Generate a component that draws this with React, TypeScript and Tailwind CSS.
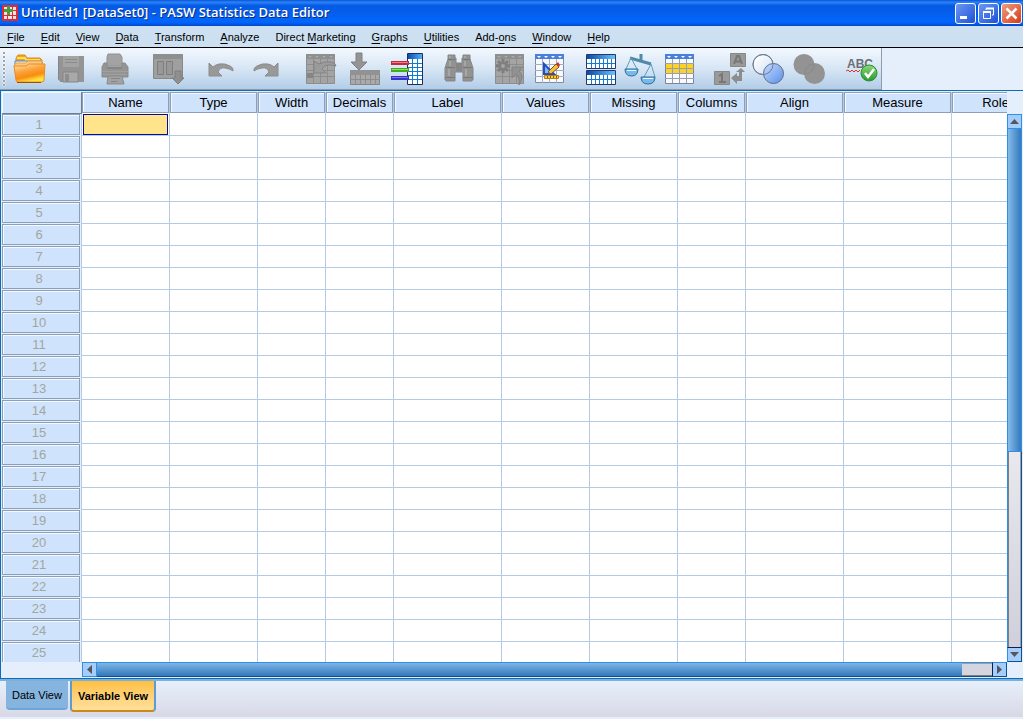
import { useState } from "react"
import type { ReactNode } from "react"

const menus = [
  { label: "File", key: 0 },
  { label: "Edit", key: 0 },
  { label: "View", key: 0 },
  { label: "Data", key: 0 },
  { label: "Transform", key: 0 },
  { label: "Analyze", key: 0 },
  { label: "Direct Marketing", key: 7 },
  { label: "Graphs", key: 0 },
  { label: "Utilities", key: 0 },
  { label: "Add-ons", key: 4 },
  { label: "Window", key: 0 },
  { label: "Help", key: 0 },
]

const columns = [
  { name: "Name", width: 88 },
  { name: "Type", width: 88 },
  { name: "Width", width: 68 },
  { name: "Decimals", width: 68 },
  { name: "Label", width: 108 },
  { name: "Values", width: 88 },
  { name: "Missing", width: 88 },
  { name: "Columns", width: 68 },
  { name: "Align", width: 98 },
  { name: "Measure", width: 108 },
  { name: "Role", width: 88 },
]

const rows = Array.from({ length: 25 }, (_, i) => i + 1)

function Icon({ children }: { children: ReactNode }) {
  return (
    <svg width="34" height="34" viewBox="0 0 34 34" className="shrink-0" aria-hidden="true">
      {children}
    </svg>
  )
}

// small triangles in the header strip of the table icons
function HeaderMarks({ x, y, fill }: { x: number; y: number; fill: string }) {
  return (
    <g fill={fill}>
      {[0, 7, 14, 21].map((d) => (
        <path key={d} d={`M${x + d} ${y}h4l-2 2z`} />
      ))}
    </g>
  )
}

const OpenIcon = () => (
  <Icon>
    <defs>
      <linearGradient id="folderFront" x1="0" y1="0" x2="0.4" y2="1">
        <stop offset="0" stopColor="#ffe9c4" />
        <stop offset="0.45" stopColor="#fba43a" />
        <stop offset="0.75" stopColor="#f98b12" />
        <stop offset="1" stopColor="#ffe23c" />
      </linearGradient>
    </defs>
    <path d="M3 12V6l2-3h7l2 3h13l2 2v6H3z" fill="#f9a21d" stroke="#e08a1c" />
    <path d="M4 6h8l1 2h14" fill="none" stroke="#ffe25a" strokeWidth="2" />
    <path d="M2 9h26l1 1v4H2z" fill="#e8f4ff" stroke="#3b8ad8" />
    <path d="M1 14l2-3h10l2-2h14v6H1z" fill="#ffc878" stroke="#f0a040" />
    <path d="M1 14h12l3-2h16l-1 16q0 2-2 2H5q-2 0-2-2z" fill="url(#folderFront)" stroke="#ea8a24" />
    <path d="M4 30.500h24" stroke="#a05208" />
  </Icon>
)

const SaveIcon = () => (
  <Icon>
    <path d="M2 4h26v26H5l-3-3z" fill="#949494" />
    <path d="M7 4h16v11H7z" fill="#a4a4a4" />
    <path d="M9 7.500h12M9 10.500h12" stroke="#8b8b8b" />
    <path d="M7 20h15v10H7z" fill="#a9a9a9" stroke="#868686" />
    <path d="M9 22h4v8H9z" fill="#8d8d8d" />
    <path d="M2.500 5v22l3 3" fill="none" stroke="#858585" />
  </Icon>
)

const PrintIcon = () => (
  <Icon>
    <path d="M9 2h12l2 3v9H8V5z" fill="#a3a3a3" stroke="#929292" />
    <path d="M5 11h3v4h15v-4h3l3 4v10H3V15z" fill="#949494" stroke="#8b8b8b" />
    <path d="M3 19.500h26M4 22.500h24" stroke="#a0a0a0" />
    <path d="M8 15h15v2H8z" fill="#858585" />
    <path d="M9 24h14l2 8H8z" fill="#a2a2a2" stroke="#8b8b8b" />
    <path d="M12 26.500h9M12 29.500h6" stroke="#868686" />
  </Icon>
)

const RecallIcon = () => (
  <Icon>
    <path d="M2.500 2.500h29v24h-29z" fill="#9f9f9f" stroke="#888" />
    <path d="M2 2h30v5H2z" fill="#8f8f8f" />
    <path d="M6.500 9.500h6v13h-6zM15.500 9.500h6v13h-6z" fill="#989898" stroke="#7e7e7e" />
    <path d="M24 19h6v7h3l-6 6-6-6h3z" fill="#8f8f8f" stroke="#7f7f7f" />
  </Icon>
)

const UndoIcon = () => (
  <Icon>
    <path d="M5 11v13h13l-4-4q2-5 7-4 6 1 8 3 1-3-3-5-5-3-11-2-4 1-6 3z" fill="#999" stroke="#8c8c8c" />
  </Icon>
)

const RedoIcon = () => (
  <Icon>
    <path d="M30 11v13H17l4-4q-2-5-7-4-6 1-8 3-1-3 3-5 5-3 11-2 4 1 6 3z" fill="#999" stroke="#8c8c8c" />
  </Icon>
)

const GreyTable = () => (
  <g>
    <path d="M3.500 2.500h28v29h-28z" fill="#a4a4a4" stroke="#8d8d8d" />
    <path d="M3 2h29v5H3z" fill="#8f8f8f" />
    <HeaderMarks x={5} y={4} fill="#a9a9a9" />
    <path d="M10.500 7v24M17.500 7v24M24.500 7v24M3 12.500h29M3 18.500h29M3 24.500h29" stroke="#8d8d8d" />
  </g>
)

const GoToCaseIcon = () => (
  <Icon>
    <GreyTable />
    <path d="M4 21h6v5H4z" fill="#858585" />
    <path d="M11 9v12h12l-4-4q2-4 6-4 4 0 8 1 0-3-5-4-7-1-12 2z" fill="#9b9b9b" stroke="#838383" />
  </Icon>
)

const GoToVariableIcon = () => (
  <Icon>
    <path d="M3.500 18.500h29v14h-29z" fill="#a9a9a9" stroke="#858585" />
    <path d="M3 18h30v5H3z" fill="#929292" />
    <path d="M8.500 23v10M13.500 23v10M18.500 23v10M23.500 23v10M28.500 23v10M3 27.500h30" stroke="#8d8d8d" />
    <path d="M9 1h6v9h5l-8 8-8-8h5z" fill="#949494" stroke="#808080" />
  </Icon>
)

const VariablesIcon = () => (
  <Icon>
    <defs>
      <linearGradient id="varHead" x1="0" y1="0" x2="1" y2="0">
        <stop offset="0" stopColor="#0c4fae" />
        <stop offset="1" stopColor="#4fb0fa" />
      </linearGradient>
    </defs>
    <path d="M16.500 1.500h15v31h-15z" fill="#fff" stroke="#1d2c5e" />
    <path d="M17 2h14v5H17z" fill="url(#varHead)" />
    <path d="M21.500 7v25M26.500 7v25M17 11.500h14M17 15.500h14M17 19.500h14M17 23.500h14M17 27.500h14" stroke="#1278d8" />
    <path d="M0 9h18v4H0z" fill="#c52a3e" />
    <path d="M1 10.500h16" stroke="#ee7a84" />
    <path d="M0 16h18v4H0z" fill="#3fae1f" />
    <path d="M1 17.500h16" stroke="#8ee068" />
    <path d="M0 24h18v4H0z" fill="#2e37c4" />
    <path d="M1 25.500h16" stroke="#8c70ee" />
  </Icon>
)

const FindIcon = () => (
  <Icon>
    <path d="M6 3h7v3h1v5h6V6h1V3h7v4l3 9v12h-1v1h-9v-9h-8v9H4v-1H3V16l3-9z" fill="#929292" stroke="#868686" />
    <path d="M6 7.500h7M21 7.500h7M4 15.500h9M21 15.500h9M3 25.500h10M21 25.500h10" stroke="#787878" />
    <path d="M8 4v2M8 9v5M7 17v7M23 4v2M23 9v5M24 17v7" stroke="#a6a6a6" strokeWidth="2" />
    <path d="M14 11h6v8h-6z" fill="#868686" />
  </Icon>
)

const InsertCasesIcon = () => (
  <Icon>
    <GreyTable />
    <path d="M11 7v14M4 14h14M6 9l10 10M16 9L6 19" stroke="#7f7f7f" strokeWidth="3" />
    <circle cx="11" cy="14" r="2" fill="#a5a5a5" />
    <path d="M20 15h11l-4 4q6 5 0 14 1-8-3-11l-4 4z" fill="#919191" stroke="#828282" />
  </Icon>
)

const InsertVariableIcon = () => (
  <Icon>
    <path d="M2.500 2.500h28v28h-28z" fill="#f6f9fd" stroke="#7e8ca4" />
    <path d="M2 2h29v5H2z" fill="#4a80da" />
    <HeaderMarks x={4} y={4} fill="#fff" />
    <path d="M9.500 7v24M16.500 7v24M23.500 7v24M2 12.500h29M2 18.500h29M2 24.500h29" stroke="#a3adbd" />
    <path d="M11 12v10h10z" fill="#8bb4f4" stroke="#1c50c4" strokeWidth="2" />
    <path d="M15 20l8-8 3 3-8 7z" fill="#f5c13c" stroke="#7c5420" />
    <path d="M23 12l2-2 2 3-1 2z" fill="#c33a2a" />
    <path d="M11.500 23.500h14v3h-14z" fill="#ffd02c" stroke="#c07b0a" />
    <path d="M14.500 24v2M17.500 24v2M20.500 24v2M23.500 24v2" stroke="#8d5a00" />
  </Icon>
)

const SplitTable = ({ y }: { y: number }) => (
  <g transform={`translate(2 ${y})`}>
    <path d="M.5.5h29v14H.5z" fill="#fff" stroke="#24386c" />
    <path d="M1 1h28v4H1z" fill="url(#splitHead)" />
    <path d="M5.500 5v9M9.500 5v9M13.500 5v9M17.500 5v9M21.500 5v9M25.500 5v9M1 9.500h28" stroke="#1679d2" />
  </g>
)

const SplitIcon = () => (
  <Icon>
    <defs>
      <linearGradient id="splitHead" x1="0" y1="0" x2="1" y2="0">
        <stop offset="0" stopColor="#0a4aa4" />
        <stop offset="1" stopColor="#6cc2ff" />
      </linearGradient>
    </defs>
    <SplitTable y={2} />
    <SplitTable y={18} />
  </Icon>
)

const WeightIcon = () => (
  <Icon>
    <path d="M7 6l21 6M18 2v8" stroke="#4f8aa8" strokeWidth="3" />
    <path d="M8 6L3 17M8 6l6 11M28 12l-7 13M28 12l4 13" stroke="#5f9cba" fill="none" />
    <path d="M2 17h13q0 7-6.500 7T2 17z" fill="#79b8ea" stroke="#2d6f9d" />
    <path d="M18 25h14q0 7-7 7t-7-7z" fill="#79b8ea" stroke="#2d6f9d" />
    <path d="M4 18.500h9M20 26.500h10" stroke="#e8f7ff" />
  </Icon>
)

const SelectIcon = () => (
  <Icon>
    <path d="M3.500 2.500h28v29h-28z" fill="#f8fafd" stroke="#7787a2" />
    <path d="M3 2h29v5H3z" fill="#4a80da" />
    <HeaderMarks x={5} y={4} fill="#fff" />
    <path d="M4 12h27v10H4z" fill="#fcd228" />
    <path d="M10.500 7v24M17.500 7v24M24.500 7v24M3 11.500h29M3 16.500h29M3 21.500h29M3 26.500h29" stroke="#97a0ae" />
  </Icon>
)

const ValueLabelsIcon = () => (
  <Icon>
    <path d="M18.500 1.500h15v13h-15zM2.500 19.500h15v13h-15z" fill="#9a9a9a" stroke="#888" />
    <path d="M22 12l3-8h2l3 8M23.500 9.500h5" fill="none" stroke="#777" strokeWidth="2" />
    <path d="M7 24l3-2v8M7 30h7" fill="none" stroke="#777" strokeWidth="2" />
    <path d="M19 26l6-5v3h2v-4h-3l5-4 4 4h-3v9h-5v3z" fill="#8d8d8d" />
  </Icon>
)

const SetsIcon = () => (
  <Icon>
    <defs>
      <linearGradient id="setWhite" x1="0" y1="0" x2="1" y2="1">
        <stop offset="0.1" stopColor="#fff" />
        <stop offset="1" stopColor="#cfdff2" />
      </linearGradient>
      <linearGradient id="setBlue" x1="0" y1="0" x2="1" y2="1">
        <stop offset="0" stopColor="#c4dcff" />
        <stop offset="1" stopColor="#5b8fe8" />
      </linearGradient>
    </defs>
    <circle cx="11" cy="12.500" r="10" fill="url(#setWhite)" stroke="#6f7d92" />
    <circle cx="21.500" cy="21.500" r="10" fill="url(#setBlue)" stroke="#5c6b85" />
    <circle cx="11" cy="12.500" r="10" fill="none" stroke="#6f7d92" />
  </Icon>
)

const AllVariablesIcon = () => (
  <Icon>
    <circle cx="12" cy="12.500" r="10.500" fill="#939393" />
    <circle cx="22.500" cy="21.500" r="10.500" fill="#939393" />
    <path d="M12.500 21.500a10 10 0 0 1 9.500-9.500" fill="none" stroke="#888" />
    <path d="M22.500 12.500a10 10 0 0 1-9.500 9.500" fill="none" stroke="#888" />
  </Icon>
)

const SpellIcon = () => (
  <Icon>
    <defs>
      <linearGradient id="okGreen" x1="0" y1="0" x2="0" y2="1">
        <stop offset="0" stopColor="#8fd878" />
        <stop offset="1" stopColor="#249a2c" />
      </linearGradient>
    </defs>
    <text x="3" y="16" fontSize="12" fontWeight="bold" fill="#6b6f76" fontFamily="Liberation Sans, sans-serif">
      ABC
    </text>
    <path d="M2 19l2-1 2 2 2-2 2 2 2-2 2 2 2-2" fill="none" stroke="#e33224" />
    <circle cx="25" cy="21" r="8" fill="url(#okGreen)" stroke="#2d8c36" />
    <path d="M21 21l3 4 6-8" fill="none" stroke="#fff" strokeWidth="2.500" />
  </Icon>
)

const toolGroups = [
  {
    button: "w-[43px]",
    tools: [
      { name: "Open data document", icon: <OpenIcon /> },
      { name: "Save this document", icon: <SaveIcon /> },
      { name: "Print", icon: <PrintIcon /> },
    ],
  },
  { button: "w-10", tools: [{ name: "Recall recently used dialogs", icon: <RecallIcon /> }] },
  {
    button: "w-11",
    tools: [
      { name: "Undo", icon: <UndoIcon /> },
      { name: "Redo", icon: <RedoIcon /> },
    ],
  },
  {
    button: "w-11",
    tools: [
      { name: "Go to case", icon: <GoToCaseIcon /> },
      { name: "Go to variable", icon: <GoToVariableIcon /> },
      { name: "Variables", icon: <VariablesIcon /> },
    ],
  },
  { button: "w-9", tools: [{ name: "Find", icon: <FindIcon /> }] },
  {
    button: "w-[41px]",
    tools: [
      { name: "Insert cases", icon: <InsertCasesIcon /> },
      { name: "Insert variable", icon: <InsertVariableIcon /> },
    ],
  },
  {
    button: "w-[39px]",
    tools: [
      { name: "Split file", icon: <SplitIcon /> },
      { name: "Weight cases", icon: <WeightIcon /> },
      { name: "Select cases", icon: <SelectIcon /> },
    ],
  },
  {
    button: "w-10",
    tools: [
      { name: "Value labels", icon: <ValueLabelsIcon /> },
      { name: "Use variable sets", icon: <SetsIcon /> },
      { name: "Show all variables", icon: <AllVariablesIcon /> },
    ],
  },
  { button: "w-[41px]", tools: [{ name: "Spell check", icon: <SpellIcon /> }] },
]

function TitleBar() {
  const control = "w-[21px] h-[21px] rounded-[3px] border border-white flex items-center justify-center"
  return (
    <header className="h-[26px] shrink-0 flex items-center pl-[2px] pr-px bg-[linear-gradient(to_bottom,#0a4fd8_0%,#2a85f8_8%,#0559e4_22%,#0560ee_55%,#0066ff_85%,#0348c8_100%)]">
      <svg width="16" height="16" viewBox="0 0 16 16" aria-hidden="true">
        <path d="M0 0h16v16H0z" fill="#d92b38" />
        <path d="M2 2h3v3H2zM6 2h4v3H6zM11 2h3v3h-3zM2 6h3v4H2zM6 6h4v4H6zM11 6h3v4h-3zM2 11h3v3H2zM6 11h4v3H6zM11 11h3v3h-3z" fill="#fbe3e3" />
        <path d="M5 1h3v3h3v3H8v3H5V7H2V4h3z" fill="#4f9a3c" />
      </svg>
      <h1 className="flex-1 pl-[3px] font-['Open_Sans'] text-[13px] font-semibold text-white whitespace-nowrap [text-shadow:1px_1px_#0a2a80]">
        Untitled1 [DataSet0] - PASW Statistics Data Editor
      </h1>
      <div className="flex gap-[2px]">
        <button aria-label="Minimize" className={`${control} bg-linear-to-br from-[#6d97f4] to-[#1c4fd6]`}>
          <svg width="15" height="15" viewBox="0 0 15 15">
            <path d="M2 10h7v3H2z" fill="#fff" />
          </svg>
        </button>
        <button aria-label="Restore" className={`${control} bg-linear-to-br from-[#6d97f4] to-[#1c4fd6]`}>
          <svg width="15" height="15" viewBox="0 0 15 15" fill="none" stroke="#fff">
            <path d="M5 4V2.500h7.500V9H11" />
            <path d="M2.500 6v6.500h7V6M2 6h8" />
            <path d="M2 6h8M5 2.500h8" strokeWidth="2" />
          </svg>
        </button>
        <button aria-label="Close" className={`${control} bg-linear-to-br from-[#f09a7e] to-[#d2380c]`}>
          <svg width="15" height="15" viewBox="0 0 15 15" stroke="#fff" strokeWidth="2.500">
            <path d="M2.500 2.500l10 10M12.500 2.500l-10 10" />
          </svg>
        </button>
      </div>
    </header>
  )
}

function MenuBar() {
  return (
    <nav className="h-[22px] shrink-0 flex items-center gap-4 px-[7px] bg-[#cde0f1] border-b border-black text-[11px] leading-[14px]">
      {menus.map(({ label, key }) => (
        <button key={label} className="whitespace-nowrap">
          {label.slice(0, key)}
          <span className="underline underline-offset-2">{label[key]}</span>
          {label.slice(key + 1)}
        </button>
      ))}
    </nav>
  )
}

function ToolBar() {
  return (
    <div className="h-[42px] shrink-0 flex bg-[#e4effb]">
      <div className="flex items-center border-r border-b border-[#8f9bab] bg-linear-to-b from-[#f3f8fe] via-[#d7e6f5] to-[#b2cde8]">
        <div className="w-2 h-9 bg-[radial-gradient(circle,#a2a2a2_1px,#ffffff_1px,transparent_2px)] bg-[length:8px_4px]" />
        <div className="flex gap-[11px]">
          {toolGroups.map(({ button, tools }) => (
            <div key={tools[0].name} className="flex">
              {tools.map(({ name, icon }) => (
                <button key={name} aria-label={name} className={`${button} h-10 flex items-center justify-center`}>
                  {icon}
                </button>
              ))}
            </div>
          ))}
        </div>
      </div>
    </div>
  )
}

function VariableGrid() {
  const box = "border border-[#8c9fb8] bg-[#cfe3fc] shadow-[inset_1px_1px_#f4f9ff] h-[21px] flex items-center justify-center"
  return (
    <table className="table-fixed w-[1038px] border-separate border-spacing-0 bg-white text-[13px] leading-4">
      <colgroup>
        <col style={{ width: 80 }} />
        {columns.map(({ name, width }) => (
          <col key={name} style={{ width }} />
        ))}
      </colgroup>
      <thead>
        <tr className="h-[22px]">
          <td className="p-0 align-top bg-[#e4effb]">
            <div className="h-[22px] border-r border-b border-[#6f7f94] bg-[#cfe3fc] shadow-[inset_1px_1px_#f4f9ff]" />
          </td>
          {columns.map(({ name }) => (
            <th key={name} scope="col" className="p-0 align-top font-normal border-r border-[#b4cbe4]">
              <div className={box}>{name}</div>
            </th>
          ))}
        </tr>
      </thead>
      <tbody>
        {rows.map((row) => (
          <tr key={row} className="h-[22px]">
            <th scope="row" className="p-0 pr-px align-top font-normal text-[#a3a69e] bg-[#e4effb] border-r border-[#b4cbe4]">
              <div className={`${box} pr-1`}>{row}</div>
            </th>
            {columns.map(({ name }) => (
              <td key={name} className="p-0 border-r border-b border-[#b4cbe4]">
                {row === 1 && name === "Name" && (
                  <div className="mx-px h-[21px] border border-[#0a0a9c] bg-[#ffe48c]" />
                )}
              </td>
            ))}
          </tr>
        ))}
      </tbody>
    </table>
  )
}

function Arrow({ d }: { d: string }) {
  return (
    <svg width="9" height="9" viewBox="0 0 9 9" aria-hidden="true">
      <path d={d} fill="#55565c" />
    </svg>
  )
}

const arrowButton = "w-[15px] h-[15px] shrink-0 flex items-center justify-center bg-[#a5cdfb] border border-[#2d8fe8]"

function VerticalScroll() {
  return (
    <div className="flex-1 min-h-0 w-[15px] flex flex-col">
      <button aria-label="Scroll up" className={arrowButton}>
        <Arrow d="M0 7l4.500-5L9 7z" />
      </button>
      <div className="grow-[323] border-x border-[#2d8fe8] bg-linear-to-r from-[#84bbe8] to-[#3379bb]" />
      <div className="grow-[196] border-x border-t border-[#2d8fe8] border-r-[#0b4f94] bg-linear-to-b from-[#e8e8ee] to-[#d0d0dc] shadow-[inset_1px_0_#808080,inset_-1px_0_#a0a0a0]" />
      <button aria-label="Scroll down" className={`${arrowButton} border-t-[#10204c] border-r-[#0b4f94] border-b-[#0b4f94]`}>
        <Arrow d="M0 2h9L4.500 7z" />
      </button>
    </div>
  )
}

function HorizontalScroll() {
  return (
    <div className="ml-[81px] mr-4 h-[15px] shrink-0 flex">
      <button aria-label="Scroll left" className={arrowButton}>
        <Arrow d="M7 0v9L2 4.500z" />
      </button>
      <div className="grow-[865] border-y border-t-[#2d8fe8] border-b-[#0b4f94] bg-linear-to-b from-[#7db5e6] to-[#3379bb]" />
      <div className="grow-[30] border-y border-t-[#2d8fe8] border-b-[#0b4f94] bg-[#d5d5e0] shadow-[inset_0_1px_#a0a0a0,inset_0_-1px_#808080]" />
      <button aria-label="Scroll right" className={`${arrowButton} border-l-[#10204c] border-r-[#0b4f94] border-b-[#0b4f94]`}>
        <Arrow d="M2 0l5 4.500L2 9z" />
      </button>
    </div>
  )
}

function ViewTabs() {
  const [active, setActive] = useState("Variable View")
  return (
    <div className="shrink-0 flex items-start gap-[2px] pl-[6px] h-[38px] text-[11px] leading-[14px] border-b-2 border-[#e4effb] bg-linear-to-b from-[#e6f0fa] to-[#d8d8e6]">
      {["Data View", "Variable View"].map((view) => (
        <button
          key={view}
          onClick={() => setActive(view)}
          className={
            view === active
              ? "h-[31px] px-[6px] rounded-b-[4px] border-2 border-t-0 border-[#5f9bd0] border-b-[#c98a1a] bg-linear-to-b from-[#ffc040] to-[#ffe09c] font-bold"
              : "h-[29px] px-[6px] rounded-b-[4px] border-b-2 border-[#6ba6d8] bg-[#85b4de]"
          }
        >
          {view}
        </button>
      ))}
    </div>
  )
}

export default function App() {
  return (
    <div className="h-screen flex flex-col overflow-hidden bg-[#e4effb] text-black font-['Liberation_Sans',Arial,sans-serif]">
      <TitleBar />
      <MenuBar />
      <ToolBar />
      <main className="flex-1 min-h-0 flex flex-col border-t border-l border-b border-[#0e6bb8] pt-px pb-px">
        <div className="flex-1 min-h-0 flex pl-px pr-px">
          <div className="flex-1 min-w-0 overflow-hidden">
            <VariableGrid />
          </div>
          <div className="flex flex-col pt-[22px]">
            <VerticalScroll />
          </div>
        </div>
        <HorizontalScroll />
      </main>
      <div className="h-[2px] shrink-0 bg-[#7ab0dd]" />
      <ViewTabs />
    </div>
  )
}
